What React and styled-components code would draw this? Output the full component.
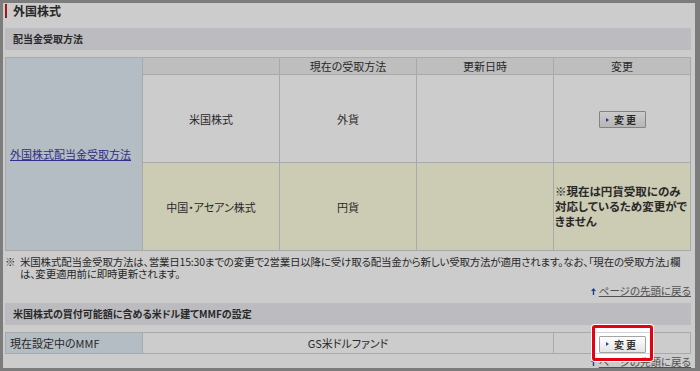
import React from "react";
import styled, { createGlobalStyle } from "styled-components";

const GlobalStyle = createGlobalStyle`
  html, body {
    margin: 0;
    padding: 0;
    background: #fff;
  }
  body {
    font-family: "Noto Sans CJK JP", "Liberation Sans", sans-serif;
    font-size: 11px;
    color: #333;
  }
`;

const Frame = styled.div`
  width: 700px;
  height: 371px;
  box-sizing: border-box;
  border: 3px solid #9c9c9c;
  border-right-width: 5px;
  padding: 0 4px 0 2px;
  background: #fff;
`;

const PageTitle = styled.h1`
  margin: 1px 0 0;
  height: 14px;
  line-height: 14px;
  border-left: 2px solid #c81e1e;
  padding-left: 6px;
  font-size: 12px;
  font-weight: bold;
  color: #333;
`;

const SectionBar = styled.h2`
  margin: ${(p) => p.$top}px 0 0;
  height: 22px;
  line-height: 22px;
  padding-left: 8px;
  background: #ebebf0;
  font-size: 10px;
  font-weight: bold;
  color: #333;
  font-feature-settings: "palt";
`;

const Table = styled.table`
  margin-top: 7px;
  width: 100%;
  border-collapse: collapse;
  table-layout: fixed;
  font-size: 11px;
  font-feature-settings: "palt";
  td,
  th {
    border: 1px solid #d4d4d4;
    padding: 0;
  }
`;

const HeadCell = styled.th`
  height: 16px;
  background: #eee;
  font-weight: normal;
  text-align: center;
  line-height: 16px;
`;

const LabelCell = styled.td`
  background: #e1ebf5;
  text-align: left;
  padding-left: 4px !important;
`;

const Cell = styled.td`
  height: ${(p) => p.$h || 20}px;
  background: ${(p) => (p.$tone === "cream" ? "#fffee0" : "#fff")};
  text-align: center;
  vertical-align: middle;
`;

const NoticeCell = styled.td`
  background: #fffee0;
  text-align: left;
  vertical-align: middle;
  padding: 0 1px !important;
  font-size: 11.5px;
  font-weight: bold;
  line-height: 15px;
`;

const Link = styled.a`
  color: #3b3ba8;
  text-decoration: underline;
`;

const Note = styled.div`
  display: flex;
  margin-top: 5px;
  font-size: 10.5px;
  line-height: 12px;
  letter-spacing: -0.2px;
  font-feature-settings: "palt";
  span:first-child {
    flex: 0 0 15px;
  }
`;

const PageTop = styled.div`
  margin-top: ${(p) => p.$top}px;
  height: 12px;
  display: flex;
  justify-content: flex-end;
  align-items: center;
  gap: 3px;
  font-size: 10.5px;
  line-height: 12px;
  font-feature-settings: "palt";
  a {
    color: #666;
    text-decoration: underline;
  }
`;

const ChangeButton = styled.button`
  display: inline-flex;
  align-items: center;
  justify-content: center;
  gap: 5px;
  width: 47px;
  height: 17px;
  padding: 0;
  border: 1px solid #a4a4a4;
  border-radius: 1px;
  background: linear-gradient(#fff, #e4e4e4);
  font-family: "Noto Sans CJK JP", sans-serif;
  font-size: 10px;
  font-weight: bold;
  letter-spacing: 2px;
  color: #333;
  &::before {
    content: "";
    border-left: 3px solid #2a46b0;
    border-top: 2px solid transparent;
    border-bottom: 2px solid transparent;
  }
`;

const Spot = styled.span`
  position: relative;
  display: inline-block;
  vertical-align: middle;
`;

const SpotRing = styled.span`
  position: absolute;
  top: -8px;
  bottom: -8px;
  left: -7px;
  right: -7px;
  border: 3px solid #e60012;
  border-radius: 3px;
  box-shadow: 0 0 0 1px #fff, 0 0 0 3000px rgba(0, 0, 0, 0.2);
  pointer-events: none;
  z-index: 5;
`;

const UpArrow = () => (
  <svg width="5" height="7" viewBox="0 0 5 7">
    <path d="M2.5 0 L5 3 H3.2 V7 H1.8 V3 H0 Z" fill="#3050b0" />
  </svg>
);

const BackToTop = ({ top }) => (
  <PageTop $top={top}>
    <UpArrow />
    <a href="#top">ページの先頭に戻る</a>
  </PageTop>
);

export default function App() {
  return (
    <>
      <GlobalStyle />
      <Frame>
        <PageTitle>外国株式</PageTitle>
        <SectionBar $top={10}>配当金受取方法</SectionBar>
        <Table>
          <tbody>
            <tr>
              <LabelCell rowSpan={3}>
                <Link href="#dividend">外国株式配当金受取方法</Link>
              </LabelCell>
              <HeadCell />
              <HeadCell>現在の受取方法</HeadCell>
              <HeadCell>更新日時</HeadCell>
              <HeadCell>変更</HeadCell>
            </tr>
            <tr>
              <Cell $h={87}>米国株式</Cell>
              <Cell $h={87}>外貨</Cell>
              <Cell $h={87} />
              <Cell $h={87}>
                <ChangeButton>変更</ChangeButton>
              </Cell>
            </tr>
            <tr>
              <Cell $h={87} $tone="cream">
                中国・アセアン株式
              </Cell>
              <Cell $h={87} $tone="cream">
                円貨
              </Cell>
              <Cell $h={87} $tone="cream" />
              <NoticeCell>※現在は円貨受取にのみ対応しているため変更ができません</NoticeCell>
            </tr>
          </tbody>
        </Table>
        <Note>
          <span>※</span>
          <span>
            米国株式配当金受取方法は、営業日15:30までの変更で2営業日以降に受け取る配当金から新しい受取方法が適用されます。なお、「現在の受取方法」欄は、変更適用前に即時更新されます。
          </span>
        </Note>
        <BackToTop top={5} />
        <SectionBar $top={6}>米国株式の買付可能額に含める米ドル建てMMFの設定</SectionBar>
        <Table>
          <tbody>
            <tr>
              <LabelCell>現在設定中のMMF</LabelCell>
              <Cell colSpan={3} $h={20}>
                GS米ドルファンド
              </Cell>
              <Cell $h={20}>
                <Spot>
                  <ChangeButton>変更</ChangeButton>
                  <SpotRing />
                </Spot>
              </Cell>
            </tr>
          </tbody>
        </Table>
        <BackToTop top={2} />
      </Frame>
    </>
  );
}
